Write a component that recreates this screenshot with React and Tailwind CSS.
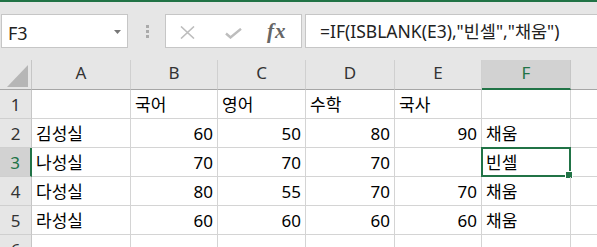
export default function App() {
  const rows = [
    ['', '국어', '영어', '수학', '국사', ''],
    ['김성실', '60', '50', '80', '90', '채움'],
    ['나성실', '70', '70', '70', '', '빈셀'],
    ['다성실', '80', '55', '70', '70', '채움'],
    ['라성실', '60', '60', '60', '60', '채움'],
    ['', '', '', '', '', ''],
  ];
  const cols = ['A', 'B', 'C', 'D', 'E', 'F'];
  const isNum = (v) => /^\d+$/.test(v);

  return (
    <div className="w-[597px] h-[247px] overflow-hidden bg-[#e6e6e6] font-['Noto_Sans','Noto_Sans_CJK_KR',sans-serif] text-black">
      <div className="h-[2px] bg-[#217346]" />
      {/* toolbar */}
      <div className="h-[58px] flex items-start pt-[12px]">
        <div className="ml-[1px] w-[127px] h-[34px] bg-white border border-[#c6c6c6] flex items-center pl-[6px] pt-[3px] relative">
          <span className="text-[18px] leading-[24px] text-[#222]">F3</span>
          <svg className="absolute left-[112px] top-[15px]" width="7" height="4" viewBox="0 0 7 4">
            <path d="M0 0 L7 0 L3.5 4 Z" fill="#777" />
          </svg>
        </div>
        <div className="w-[37px] h-[34px] flex flex-col items-center justify-center gap-[2px] pl-[1px]">
          <div className="w-[3px] h-[3px] bg-[#aaaaaa]" />
          <div className="w-[3px] h-[3px] bg-[#aaaaaa]" />
          <div className="w-[3px] h-[3px] bg-[#aaaaaa]" />
        </div>
        <div className="w-[137px] h-[34px] bg-white border border-[#c6c6c6] relative">
          <svg className="absolute left-[14px] top-[11px]" width="15" height="13" viewBox="0 0 15 13">
            <path d="M1 0.5 L14 12.5 M14 0.5 L1 12.5" stroke="#bdbdbd" strokeWidth="1.6" fill="none" />
          </svg>
          <svg className="absolute left-[59px] top-[13px]" width="17" height="11" viewBox="0 0 17 11">
            <path d="M1 5.5 L5.5 9.5 L16 0.8" stroke="#bdbdbd" strokeWidth="2.4" fill="none" />
          </svg>
          <span className="absolute left-[101px] top-[3px] font-['Liberation_Serif',serif] italic font-bold text-[21px] leading-[26px] text-[#666] tracking-[1px]">fx</span>
        </div>
        <div className="ml-[3px] flex-1 h-[34px] bg-white border border-r-0 border-[#c6c6c6] flex items-center pl-[14px]">
          <span className="text-[17.5px] leading-[32px] text-[#222] whitespace-nowrap">=IF(ISBLANK(E3),"빈셀","채움")</span>
        </div>
      </div>

      {/* grid */}
      <div className="grid grid-cols-[32px_99px_87px_88px_89px_87px_89px_1fr] bg-white text-[17px]">
        {/* header row */}
        <div className="h-[30px] bg-[#e6e6e6] border-r border-b border-r-[#c6c6c6] border-b-[#a6a6a6] relative">
          <svg className="absolute left-0 top-0" width="31" height="29" viewBox="0 0 31 29">
            <path d="M28 5 L28 27 L7 27 Z" fill="#b6b6b6" />
          </svg>
        </div>
        {cols.map((c) =>
          c === 'F' ? (
            <div key={c} className="h-[30px] bg-[#d2d2d2] border-r border-b-2 border-r-[#c6c6c6] border-b-[#217346] flex items-center justify-center pb-[3px]">
              <span className="leading-[24px] text-[#217346]">{c}</span>
            </div>
          ) : (
            <div key={c} className="h-[30px] bg-[#e6e6e6] border-r border-b border-r-[#d0d0d0] border-b-[#a6a6a6] flex items-center justify-center pb-[4px]">
              <span className="leading-[24px] text-[#333]">{c}</span>
            </div>
          )
        )}
        <div className="h-[30px] bg-[#e6e6e6] border-b border-b-[#a6a6a6]" />

        {rows.map((r, i) => {
          const rowNum = i + 1;
          const sel = rowNum === 3;
          return [
            sel ? (
              <div key={`h${i}`} className="h-[29px] bg-[#d2d2d2] border-r-2 border-b border-r-[#217346] border-b-[#cfcfcf] flex items-center justify-center">
                <span className="leading-[29px] text-[#217346]">{rowNum}</span>
              </div>
            ) : (
              <div key={`h${i}`} className="h-[29px] bg-[#e6e6e6] border-r border-b border-r-[#c6c6c6] border-b-[#cfcfcf] flex items-center justify-center">
                <span className="leading-[29px] text-[#333]">{rowNum}</span>
              </div>
            ),
            ...r.map((v, j) => {
              const selected = sel && j === 5;
              return (
                <div
                  key={`c${i}-${j}`}
                  className={`h-[29px] border-r border-b border-[#d4d4d4] flex items-center px-[4px] relative ${isNum(v) ? 'justify-end' : 'justify-start'}`}
                >
                  <span className="leading-[29px] whitespace-nowrap">{v}</span>
                  {selected && (
                    <>
                      <div className="absolute -left-[1px] -top-[1px] -right-[1px] -bottom-[1px] border-2 border-[#217346] pointer-events-none" />
                      <div className="absolute -right-[3px] -bottom-[3px] w-[6px] h-[6px] bg-[#217346] border border-white box-content" />
                    </>
                  )}
                </div>
              );
            }),
            <div key={`g${i}`} className="h-[29px] border-b border-[#d4d4d4]" />,
          ];
        })}
      </div>
    </div>
  );
}
